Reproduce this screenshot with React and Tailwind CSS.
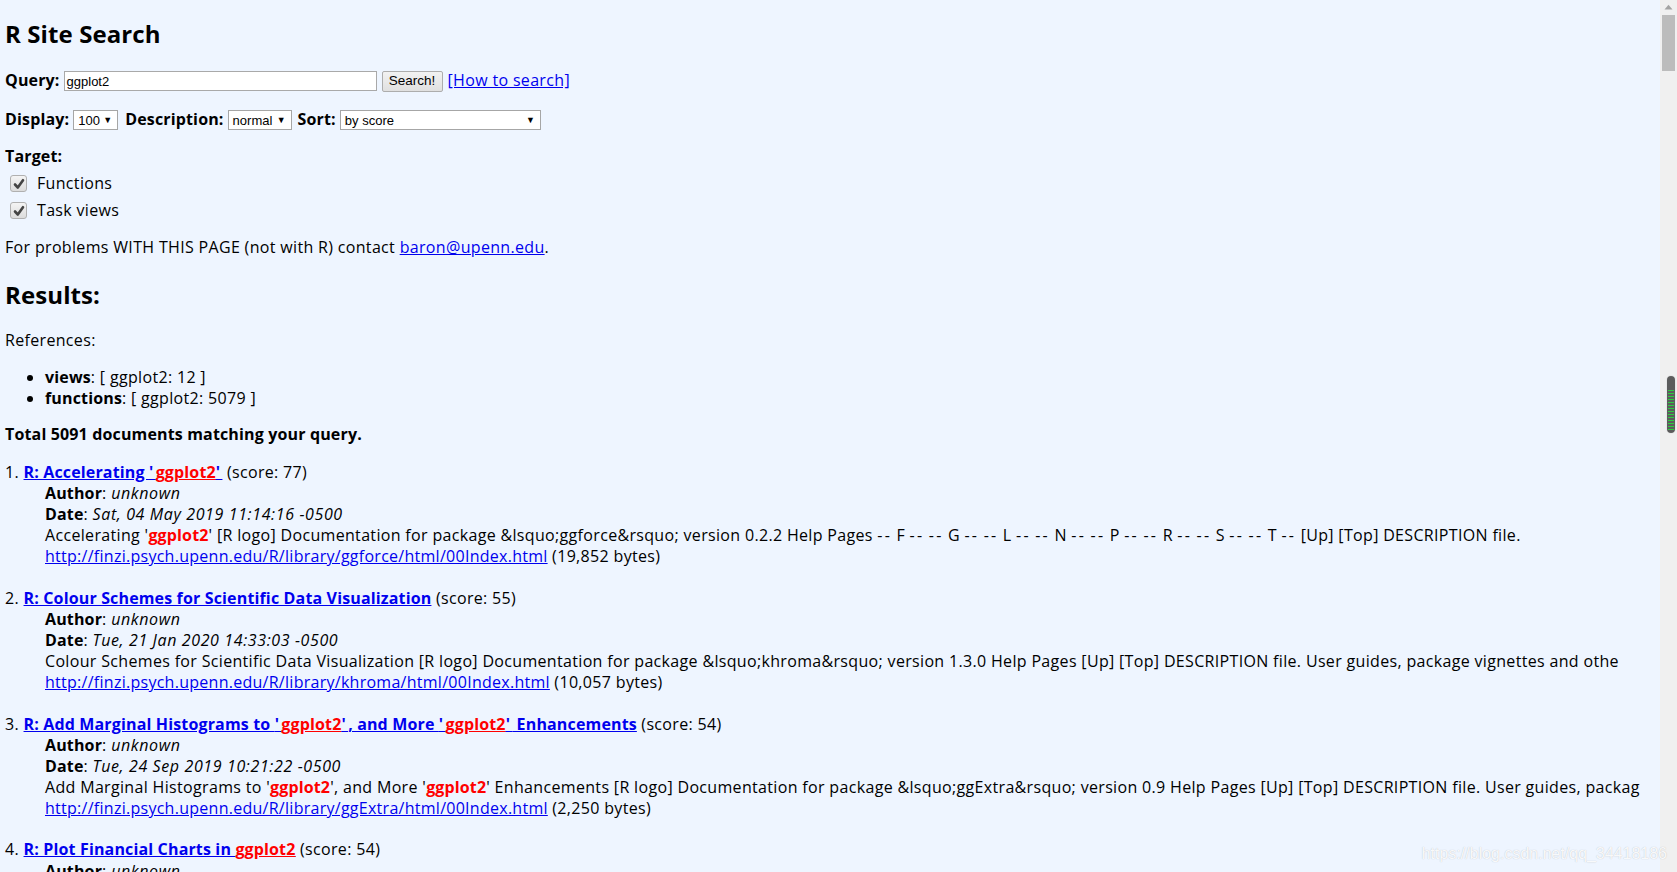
import React from "react";

const BODY = { fontFamily: '"Open Sans", "Noto Sans", sans-serif' };
const CTRL = { fontFamily: '"Liberation Sans", Arial, sans-serif' };

function Hit() {
  return <span className="font-bold tracking-[0.15px] text-[#ff0000]">ggplot2</span>;
}

function HitU() {
  return <span className="font-bold text-[#ff0000] underline">ggplot2</span>;
}

// straight quote in bold titles, set a little wider
function Q() {
  return <span className="tracking-[2.4px]">'</span>;
}

// double dash used between index letters
function D() {
  return <span className="tracking-[2.2px]">--</span>;
}

function B({ children, className = "" }) {
  return <b className={"tracking-[0.15px] " + className}>{children}</b>;
}

function I({ children }) {
  return <i className="tracking-[0.62px]">{children}</i>;
}

function Select({ width, label }) {
  return (
    <div
      style={{ ...CTRL, width }}
      className="flex h-[20px] items-center justify-between border border-[#a6a6a6] bg-white pl-[4px] pr-[5px] text-[13px] leading-none tracking-normal text-black"
    >
      <span>{label}</span>
      <span className="text-[9px]">▼</span>
    </div>
  );
}

function Check({ label, className = "" }) {
  return (
    <div className={"flex h-[27px] items-center " + className}>
      <div className="ml-[5px] flex h-[17px] w-[17px] items-center justify-center rounded-[3px] border border-[#b0b0b0] bg-gradient-to-b from-[#f4f4f4] to-[#dcdcdc]">
        <svg width="12" height="12" viewBox="0 0 12 12">
          <path d="M2 6.5 L4.8 9.5 L10 2.2" fill="none" stroke="#444" strokeWidth="2.6" strokeLinecap="round" strokeLinejoin="round" />
        </svg>
      </div>
      <span className="ml-[10px]">{label}</span>
    </div>
  );
}

function Result({ n, title, score, date, desc, url, bytes, className }) {
  return (
    <div className={className}>
      <div className="whitespace-nowrap">
        {n}.{" "}
        <a className="font-bold tracking-[0.15px] text-[#0000ee] underline">{title}</a> (score: {score})
      </div>
      <div className="pl-[40px]">
        <div>
          <B>Author</B>: <I>unknown</I>
        </div>
        <div>
          <B>Date</B>: <I>{date}</I>
        </div>
        <div className="whitespace-nowrap">{desc}</div>
        <div className="whitespace-nowrap">
          <a className="tracking-[0.27px] text-[#0000ee] underline">{url}</a> ({bytes} bytes)
        </div>
      </div>
    </div>
  );
}

const LETTERS = ["F", "G", "L", "N", "P", "R", "S", "T"];

export default function App() {
  return (
    <div className="relative flex h-[872px] w-full overflow-hidden bg-[#eef5ff]">
      {/* page body */}
      <div
        style={BODY}
        className="min-w-0 flex-1 overflow-hidden pl-[5px] text-[16px] leading-[21.1px] tracking-[0.33px] text-black"
      >
        <h2 className="mt-[18px] text-[24px] font-bold leading-[32px] tracking-[0.1px]">R Site Search</h2>

        <div className="mt-[19px] flex h-[24px] items-center whitespace-nowrap">
          <B>Query:</B>
          <div
            style={CTRL}
            className="ml-[4px] flex h-[20px] w-[313px] items-center border border-[#a9a9a9] bg-white px-[2px] text-[13px] leading-none tracking-normal"
          >
            ggplot2
          </div>
          <div
            style={CTRL}
            className="ml-[5px] flex h-[21px] w-[61px] items-center justify-center rounded-[2px] border border-[#adadad] bg-gradient-to-b from-[#f2f2f2] to-[#e0e0e0] text-[13.5px] leading-none tracking-normal"
          >
            Search!
          </div>
          <a className="ml-[5px] text-[#0000ee] underline">[How to search]</a>
        </div>

        <div className="mt-[15px] flex h-[24px] items-center whitespace-nowrap">
          <B>Display:</B>
          <div className="ml-[4px]">
            <Select width={45} label="100" />
          </div>
          <B className="ml-[7px]">Description:</B>
          <div className="ml-[4px]">
            <Select width={64} label="normal" />
          </div>
          <B className="ml-[6px]">Sort:</B>
          <div className="ml-[4px]">
            <Select width={201} label="by score" />
          </div>
        </div>

        <div className="mt-[14px] font-bold tracking-[0.15px]">Target:</div>
        <Check className="mt-[3px]" label="Functions" />
        <Check label="Task views" />

        <p className="mt-[13px]">
          For problems WITH THIS PAGE (not with R) contact{" "}
          <a className="text-[#0000ee] underline">baron@upenn.edu</a>.
        </p>

        <h2 className="mt-[21px] text-[24px] font-bold leading-[32px] tracking-[0.1px]">Results:</h2>

        <p className="mt-[19px]">References:</p>
        <ul className="mt-[16px] list-disc pl-[40px]">
          <li>
            <B>views</B>: [ ggplot2: 12 ]
          </li>
          <li>
            <B>functions</B>: [ ggplot2: 5079 ]
          </li>
        </ul>

        <p className="mt-[15px] font-bold tracking-[0.15px]">Total 5091 documents matching your query.</p>

        <Result
          className="mt-[16px]"
          n={1}
          title={
            <>
              R: Accelerating <Q />
              <HitU />
              <Q />
            </>
          }
          score={77}
          date="Sat, 04 May 2019 11:14:16 -0500"
          desc={
            <>
              Accelerating '<Hit />' [R logo] Documentation for package {"&lsquo;ggforce&rsquo;"} version 0.2.2 Help Pages{" "}
              {LETTERS.map((l) => (
                <React.Fragment key={l}>
                  <D /> {l} <D />{" "}
                </React.Fragment>
              ))}
              [Up] [Top] DESCRIPTION file.
            </>
          }
          url="http://finzi.psych.upenn.edu/R/library/ggforce/html/00Index.html"
          bytes="19,852"
        />
        <Result
          className="mt-[20.5px]"
          n={2}
          title="R: Colour Schemes for Scientific Data Visualization"
          score={55}
          date="Tue, 21 Jan 2020 14:33:03 -0500"
          desc={
            <>
              Colour Schemes for Scientific Data Visualization [R logo] Documentation for package {"&lsquo;khroma&rsquo;"} version 1.3.0 Help Pages [Up] [Top] DESCRIPTION file. User guides, package vignettes and othe
            </>
          }
          url="http://finzi.psych.upenn.edu/R/library/khroma/html/00Index.html"
          bytes="10,057"
        />
        <Result
          className="mt-[20.5px]"
          n={3}
          title={
            <>
              R: Add Marginal Histograms to <Q />
              <HitU />
              <Q />, and More <Q />
              <HitU />
              <Q /> Enhancements
            </>
          }
          score={54}
          date="Tue, 24 Sep 2019 10:21:22 -0500"
          desc={
            <>
              Add Marginal Histograms to '<Hit />', and More '<Hit />' Enhancements [R logo] Documentation for package {"&lsquo;ggExtra&rsquo;"} version 0.9 Help Pages [Up] [Top] DESCRIPTION file. User guides, packag
            </>
          }
          url="http://finzi.psych.upenn.edu/R/library/ggExtra/html/00Index.html"
          bytes="2,250"
        />
        <Result
          className="mt-[20.5px]"
          n={4}
          title={
            <>
              R: Plot Financial Charts in <HitU />
            </>
          }
          score={54}
          date="Thu, 02 Jan 2020 09:12:40 -0500"
          desc="Plot Financial Charts in ggplot2"
          url="http://finzi.psych.upenn.edu/R/library/tidyquant/html/00Index.html"
          bytes="8,104"
        />
      </div>

      {/* vertical scrollbar */}
      <div className="relative w-[17px] shrink-0 bg-[#f0f0f0]">
        <svg className="absolute left-[4px] top-[4px]" width="9" height="6" viewBox="0 0 9 6">
          <path d="M0.5 5.5 L4.5 0.8 L8.5 5.5 Z" fill="#a3a3a3" />
        </svg>
        <div className="absolute left-[2px] top-[15px] h-[56px] w-[13px] bg-[#bcbcbc]" />
        <div className="absolute left-[7px] top-[376px] flex h-[57px] w-[8px] flex-col justify-end gap-[2px] rounded-full bg-[#5c5c5c] px-[1px] pb-[3px] shadow-[0_0_0_1px_#e8e8e8]">
          {Array.from({ length: 14 }).map((_, i) => (
            <div key={i} className="h-[1px] w-full bg-[#2ecc40]" />
          ))}
        </div>
      </div>

      {/* watermark */}
      <div
        style={{ ...CTRL, textShadow: "0 0 1px rgba(0,0,0,0.25)" }}
        className="pointer-events-none absolute bottom-[8px] right-[10px] text-[16px] leading-[20px] text-white/90"
      >
        https://blog.csdn.net/qq_34418186
      </div>
    </div>
  );
}
